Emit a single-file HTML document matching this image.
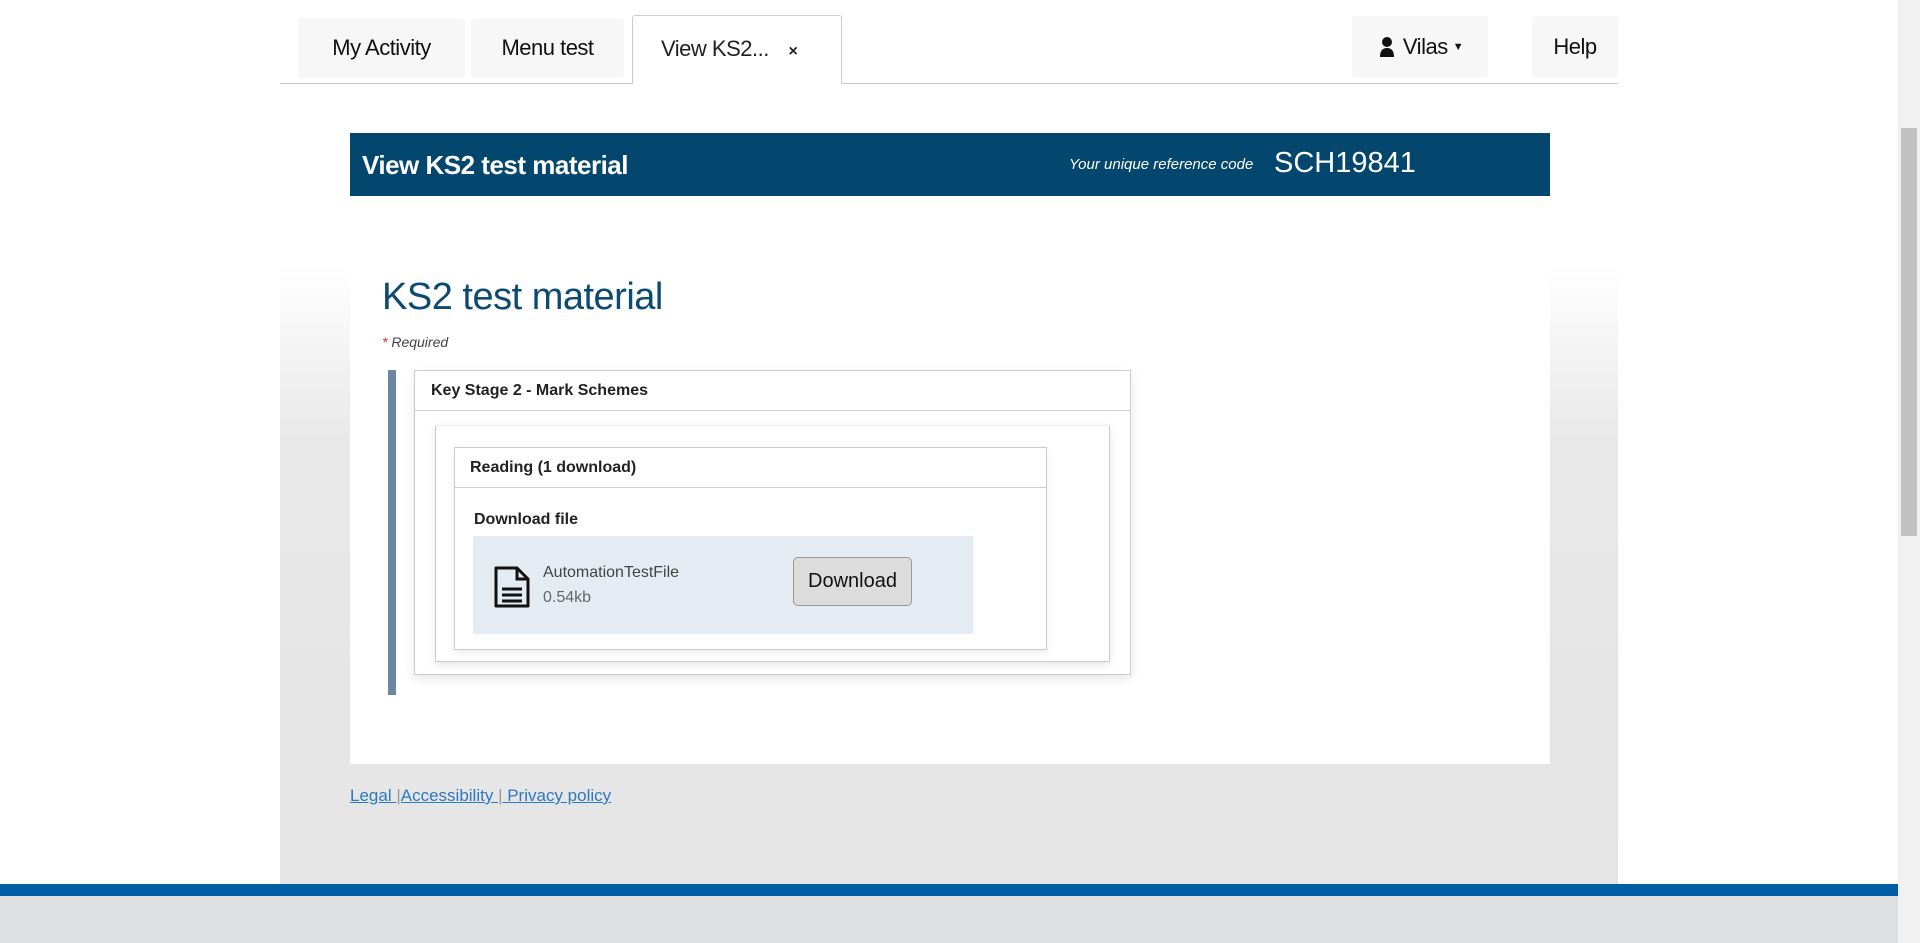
<!DOCTYPE html>
<html><head><meta charset="utf-8"><style>
*{box-sizing:border-box;margin:0;padding:0}
body{width:1920px;height:943px;overflow:hidden;background:#fff;font-family:"Liberation Sans",Arial,sans-serif;position:relative;color:#222}
.a{position:absolute}
.tab{position:absolute;background:#f7f7f7;border-radius:3px;font-size:22px;color:#111;display:flex;align-items:center;justify-content:center;letter-spacing:-0.5px}
</style></head><body>
<div class="a" style="left:280px;top:83px;width:1338px;height:801px;background:linear-gradient(#fff 0,#fff 180px,#e8e8e8 360px,#e5e5e5)"></div>
<div class="tab" style="left:298px;top:18px;width:167px;height:60px">My Activity</div>
<div class="tab" style="left:471px;top:18px;width:153px;height:60px">Menu test</div>
<div class="a" style="left:280px;top:83px;width:1338px;height:1px;background:#c8c8c8"></div>
<div class="a" style="left:632px;top:15px;width:210px;height:69px;background:#fff;border:1px solid #ccc;border-bottom:none;border-radius:3px 3px 0 0;font-size:22px;padding:20px 0 0 28px;letter-spacing:-0.5px">View KS2... <span style="font-size:16px;font-weight:bold;margin-left:14px">×</span></div>
<div class="tab" style="left:1352px;top:16px;width:136px;height:62px"><svg width="20" height="22" viewBox="0 0 20 22" style="margin-right:6px"><circle cx="10" cy="6" r="5" fill="#111"/><path d="M3 21 Q3 12 10 12 Q17 12 17 21Z" fill="#111"/></svg>Vilas <span style="font-size:11px;margin-left:5px">▼</span></div>
<div class="tab" style="left:1532px;top:16px;width:86px;height:62px">Help</div>
<div class="a" style="left:350px;top:133px;width:1200px;height:63px;background:#03466e;color:#fff">
<div class="a" style="left:12px;top:17px;font-size:26px;font-weight:bold;letter-spacing:-0.5px">View KS2 test material</div>
<div class="a" style="left:719px;top:23px;font-size:15px;font-style:italic">Your unique reference code</div>
<div class="a" style="left:924px;top:14px;font-size:29px">SCH19841</div>
</div>
<div class="a" style="left:350px;top:196px;width:1200px;height:568px;background:#fff"></div>
<div class="a" style="left:382px;top:276px;font-size:38px;color:#0b4a72;letter-spacing:-0.5px">KS2 test material</div>
<div class="a" style="left:382px;top:334px;font-size:14px;font-style:italic;color:#444"><span style="color:#d4351c">*</span> Required</div>
<div class="a" style="left:388px;top:370px;width:8px;height:325px;background:#6d87a3"></div>
<div class="a" style="left:414px;top:370px;width:717px;height:305px;border:1px solid #ccc;box-shadow:0 4px 10px rgba(0,0,0,.1);background:#fff">
<div style="height:40px;border-bottom:1px solid #ccc;font-size:16px;font-weight:bold;padding:11px 16px">Key Stage 2 - Mark Schemes</div>
</div>
<div class="a" style="left:435px;top:425px;width:675px;height:237px;border:1px solid #ccc;border-top-color:#f0f0f0;box-shadow:0 3px 8px rgba(0,0,0,.1);background:#fff"></div>
<div class="a" style="left:454px;top:447px;width:593px;height:203px;border:1px solid #ccc;background:#fff;box-shadow:0 3px 8px rgba(0,0,0,.08)">
<div style="height:40px;border-bottom:1px solid #ccc;font-size:16px;font-weight:bold;padding:11px 15px">Reading (1 download)</div>
<div style="font-size:16px;font-weight:bold;padding:23px 0 0 19px">Download file</div>
</div>
<div class="a" style="left:473px;top:536px;width:500px;height:98px;background:#e4ebf2"></div>
<svg class="a" style="left:493px;top:566px" width="38" height="42" viewBox="0 0 38 42"><path d="M3 2 H24 L35 13 V40 H3 Z" fill="none" stroke="#111" stroke-width="3" stroke-linejoin="round"/><path d="M24 2 V13 H35" fill="none" stroke="#111" stroke-width="3"/><path d="M9 23 H29 M9 29 H29 M9 35 H29" stroke="#111" stroke-width="3"/></svg>
<div class="a" style="left:543px;top:564px;font-size:16px;color:#444">AutomationTestFile</div>
<div class="a" style="left:543px;top:589px;font-size:16px;color:#666">0.54kb</div>
<div class="a" style="left:793px;top:557px;width:119px;height:49px;background:#dcdcdc;border:1px solid #999;border-radius:5px;font-size:20px;display:flex;align-items:center;justify-content:center;color:#111">Download</div>
<div class="a" style="left:350px;top:786px;font-size:17px;color:#999"><span style="color:#2e79c0;text-decoration:underline">Legal </span>|<span style="color:#2e79c0;text-decoration:underline">Accessibility </span>|<span style="color:#2e79c0;text-decoration:underline"> Privacy policy</span></div>
<div class="a" style="left:0;top:884px;width:1898px;height:12px;background:#005ea5"></div>
<div class="a" style="left:0;top:896px;width:1898px;height:47px;background:#dfe0e2"></div>
<div class="a" style="left:1898px;top:0;width:22px;height:943px;background:#f1f1f1"></div>
<div class="a" style="left:1901px;top:128px;width:16px;height:408px;background:#c1c1c1"></div>
</body></html>
